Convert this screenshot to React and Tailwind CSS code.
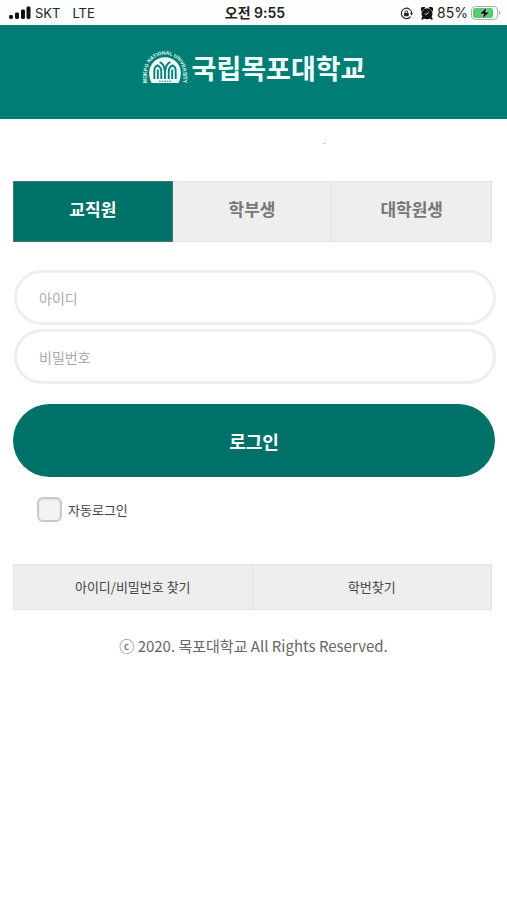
import React, { useState } from "react";

const TABS = [
  { id: "staff", label: "교직원" },
  { id: "undergraduate", label: "학부생" },
  { id: "graduate", label: "대학원생" },
];

function SignalIcon() {
  return (
    <svg width="22" height="14" viewBox="0 0 22 14" fill="#111" aria-hidden="true">
      <rect x="0" y="9" width="4" height="4" rx="1.4" />
      <rect x="6" y="6.5" width="4" height="6.5" rx="1.4" />
      <rect x="12" y="3.5" width="4" height="9.5" rx="1.4" />
      <rect x="17.5" y="0.5" width="4" height="12.5" rx="1.4" />
    </svg>
  );
}

function RotationLockIcon() {
  return (
    <svg width="13" height="13" viewBox="0 0 13 13" fill="none" stroke="#222" aria-hidden="true">
      <path d="M10.6 9.6A5.2 5.2 0 1 1 11.7 6.2" strokeWidth="1.1" />
      <path d="M10 6h3l-1.5 2.4z" fill="#222" stroke="none" />
      <rect x="4.1" y="5.9" width="4.6" height="3.4" rx="0.6" fill="#222" stroke="none" />
      <path d="M5.1 6V5a1.3 1.3 0 0 1 2.6 0v1" strokeWidth="0.9" />
    </svg>
  );
}

function AlarmIcon() {
  return (
    <svg width="12" height="13" viewBox="0 0 12 13" fill="#111" aria-hidden="true">
      <path d="M0.2 4.4A2.6 2.6 0 0 1 4.400 0.8zM11.800 4.400A2.600 2.600 0 0 0 7.600 0.800z" />
      <circle cx="6" cy="6.8" r="5.5" />
      <path d="M2.400 10.300l-1 1.400M9.600 10.300l1 1.400" stroke="#111" strokeWidth="2" strokeLinecap="round" />
      <path d="M7.800 4.600L6 7.100H3.700" fill="none" stroke="#fff" strokeWidth="0.8" />
    </svg>
  );
}

function BatteryIcon() {
  return (
    <svg width="30" height="14" viewBox="0 0 30 14" aria-hidden="true">
      <rect x="0.5" y="0.5" width="26" height="13" rx="3.6" fill="#fff" stroke="#a9aeab" />
      <rect x="2" y="2" width="20" height="10" rx="2.2" fill="#4fd06d" />
      <path d="M28 4.8c1.1.4 1.6 1.2 1.6 2.2S29.1 8.8 28 9.2z" fill="#b5b8b6" />
      <path d="M15.6 1.6L9 7.7h3.9L11.4 12.4 18.2 6.2h-3.9z" fill="#111" stroke="#fff" strokeWidth="0.9" paintOrder="stroke" />
    </svg>
  );
}

function StatusBar() {
  return (
    <div className="grid h-[25px] grid-cols-[1fr_auto_1fr] items-center bg-[#fdfefe] pt-px pr-1.5 pl-[9px] font-['Inter','Noto_Sans_CJK_KR',sans-serif] text-[13px] leading-4 text-[#222]">
      <div className="flex items-center">
        <SignalIcon />
        <span className="ml-1">SKT</span>
        <span className="ml-3">LTE</span>
      </div>
      <span className="text-sm leading-4 font-semibold">오전 9:55</span>
      <div className="flex items-center justify-end">
        <RotationLockIcon />
        <span className="ml-2">
          <AlarmIcon />
        </span>
        <span className="ml-1 text-sm leading-4">85%</span>
        <span className="ml-[3px]">
          <BatteryIcon />
        </span>
      </div>
    </div>
  );
}

function Emblem() {
  return (
    <svg width="46" height="36" viewBox="0 0 46 36" aria-hidden="true">
      <defs>
        <path id="emblem-ring" d="M5 35V22.5A18 18 0 0 1 41 22.5V35" />
      </defs>
      <text fill="#e8fbf8" fontFamily="Liberation Sans, sans-serif" fontWeight="700" fontSize="5">
        <textPath href="#emblem-ring" startOffset="50%" textAnchor="middle">
          MOKPO NATIONAL UNIVERSITY
        </textPath>
      </text>
      <path d="M9.500 33C7.800 30 7.200 26 7.200 23A15.800 15.800 0 0 1 38.800 23C38.800 26 38.200 30 36.500 33z" fill="#f1fffd" />
      <g fill="none" stroke="#007f77" strokeWidth="1.900">
        <path d="M12.300 29V21c0-3 1.300-4.800 3.200-5.600 2.300 1.100 3.800 3 3.800 6V29" />
        <path d="M33.700 29V21c0-3-1.300-4.800-3.200-5.600-2.300 1.100-3.800 3-3.800 6V29" />
        <path d="M15.800 29V19.500M30.200 29V19.500M23 29V17.500" />
        <path d="M22.600 20c-.3-4-2-6.600-5-7.800M23.400 20c.3-4 2-6.600 5-7.800" />
      </g>
      <path d="M17 31.200h12" stroke="#007f77" strokeWidth="1" strokeDasharray="1.600 1" />
    </svg>
  );
}

function Header() {
  return (
    <header className="flex h-[94px] items-start justify-center bg-[#007e76] pt-6">
      <a href="#home" className="flex items-center gap-1 text-[#f1fffd]">
        <Emblem />
        <span className="text-[27px] leading-[38px] font-bold">국립목포대학교</span>
      </a>
    </header>
  );
}

function LoginTabs({ active, onChange }) {
  return (
    <div role="tablist" className="mr-[3px] grid grid-cols-3">
      {TABS.map((tab) => (
        <button
          key={tab.id}
          type="button"
          role="tab"
          aria-selected={active === tab.id}
          onClick={() => onChange(tab.id)}
          className={
            active === tab.id
              ? "h-[61px] border border-[#4a7671] bg-[#007169] pb-1.5 text-[17px] font-bold text-white"
              : "h-[61px] border-y border-r border-[#e2e2e2] bg-[#eee] pb-1.5 text-[17px] font-bold text-[#777]"
          }
        >
          {tab.label}
        </button>
      ))}
    </div>
  );
}

const fieldClass =
  "h-[55px] rounded-full border-3 border-[#eee] bg-white px-[22px] text-sm text-[#444] placeholder:text-[#aaa] outline-none";

function LoginForm() {
  const [userId, setUserId] = useState("");
  const [password, setPassword] = useState("");
  const [autoLogin, setAutoLogin] = useState(false);

  return (
    <form className="mt-7 flex flex-col" onSubmit={(e) => e.preventDefault()}>
      <div className="-mr-px ml-px flex flex-col gap-1">
        <input
          type="text"
          aria-label="아이디"
          placeholder="아이디"
          value={userId}
          onChange={(e) => setUserId(e.target.value)}
          className={fieldClass}
        />
        <input
          type="password"
          aria-label="비밀번호"
          placeholder="비밀번호"
          value={password}
          onChange={(e) => setPassword(e.target.value)}
          className={fieldClass}
        />
      </div>
      <button type="submit" className="mt-5 h-[73px] rounded-full bg-[#007169] text-lg font-bold text-white">
        로그인
      </button>
      <label className="mt-5 ml-6 flex items-center gap-1.5 self-start text-[13px] leading-[25px] text-[#444]">
        <input
          type="checkbox"
          checked={autoLogin}
          onChange={(e) => setAutoLogin(e.target.checked)}
          className="size-[25px] appearance-none rounded-md border-2 border-[#c9c9c9] bg-[#f3f3f3] shadow-[inset_0_1px_2px_#ddd] checked:bg-[#007169]"
        />
        자동로그인
      </label>
    </form>
  );
}

export default function App() {
  const [activeTab, setActiveTab] = useState("staff");

  return (
    <div className="min-h-screen bg-white font-['Noto_Sans_CJK_KR',sans-serif]">
      <StatusBar />
      <Header />
      <main className="pr-3 pl-[13px]">
        <div className="flex h-[62px] justify-center pt-6 pl-[140px]">
          <span className="h-px w-[3px] bg-[#ccc]" />
        </div>
        <LoginTabs active={activeTab} onChange={setActiveTab} />
        <LoginForm />
        <nav className="mt-[42px] mr-[3px] grid grid-cols-2 border border-[#e2e2e2] bg-[#eee] text-center text-[13px] leading-[44px] text-[#444]">
          <a href="#find-account" className="border-r border-[#e2e2e2]">아이디/비밀번호 찾기</a>
          <a href="#find-number">학번찾기</a>
        </nav>
      </main>
      <footer className="pt-6 text-center text-[15px] leading-6 text-[#666]">
        ⓒ 2020. 목포대학교 All Rights Reserved.
      </footer>
    </div>
  );
}
